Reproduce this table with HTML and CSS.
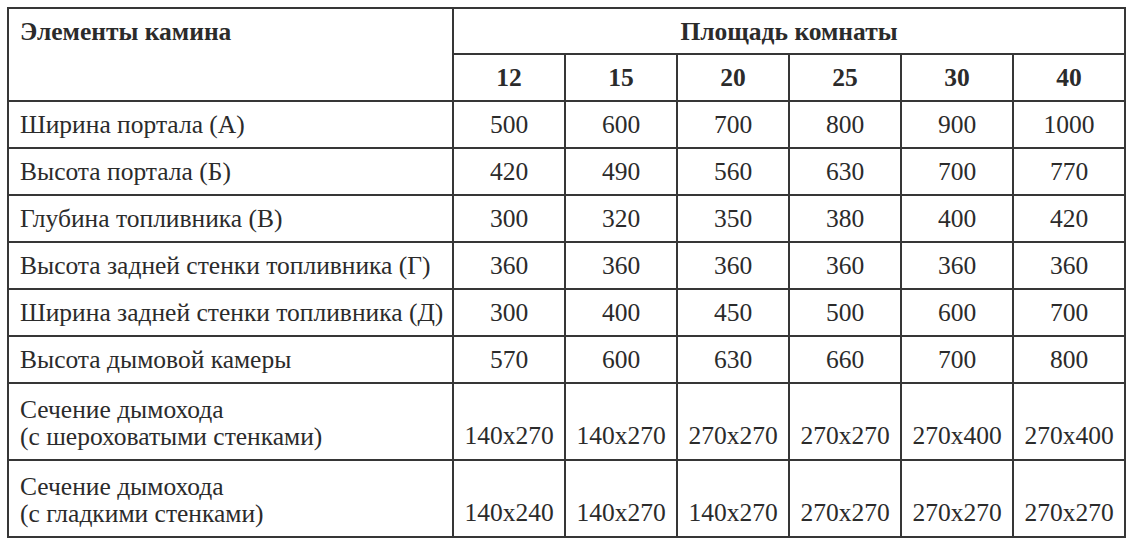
FILE: index.html
```html
<!DOCTYPE html>
<html lang="ru">
<head>
<meta charset="utf-8">
<link rel="stylesheet" href="styles.css">
</head>
<body>
<table class="spec">
  <colgroup>
    <col class="c-label">
    <col class="c-num"><col class="c-num"><col class="c-num"><col class="c-num"><col class="c-num"><col class="c-num">
  </colgroup>
  <thead>
    <tr class="h1">
      <th class="corner" rowspan="2">Элементы камина</th>
      <th class="group" colspan="6">Площадь комнаты</th>
    </tr>
    <tr class="h2">
      <th>12</th><th>15</th><th>20</th><th>25</th><th>30</th><th>40</th>
    </tr>
  </thead>
  <tbody>
    <tr class="r1"><td class="label">Ширина портала (А)</td><td>500</td><td>600</td><td>700</td><td>800</td><td>900</td><td>1000</td></tr>
    <tr class="r1"><td class="label">Высота портала (Б)</td><td>420</td><td>490</td><td>560</td><td>630</td><td>700</td><td>770</td></tr>
    <tr class="r1"><td class="label">Глубина топливника (В)</td><td>300</td><td>320</td><td>350</td><td>380</td><td>400</td><td>420</td></tr>
    <tr class="r1"><td class="label">Высота задней стенки топливника (Г)</td><td>360</td><td>360</td><td>360</td><td>360</td><td>360</td><td>360</td></tr>
    <tr class="r1"><td class="label">Ширина задней стенки топливника (Д)</td><td>300</td><td>400</td><td>450</td><td>500</td><td>600</td><td>700</td></tr>
    <tr class="r1"><td class="label">Высота дымовой камеры</td><td>570</td><td>600</td><td>630</td><td>660</td><td>700</td><td>800</td></tr>
    <tr class="r2"><td class="label">Сечение дымохода<br>(с шероховатыми стенками)</td><td>140x270</td><td>140x270</td><td>270x270</td><td>270x270</td><td>270x400</td><td>270x400</td></tr>
    <tr class="r2 last"><td class="label">Сечение дымохода<br>(с гладкими стенками)</td><td>140x240</td><td>140x270</td><td>140x270</td><td>270x270</td><td>270x270</td><td>270x270</td></tr>
  </tbody>
</table>
</body>
</html>
```
FILE: styles.css
```css
html, body {
  margin: 0;
  padding: 0;
  background: #ffffff;
}
body {
  padding: 7px 0 0 7px;
  font-family: "Liberation Serif", "Times New Roman", serif;
  color: #2b2b2b;
}
.spec {
  border-collapse: collapse;
  width: 1116px;
  table-layout: fixed;
  font-size: 25.5px;
}
.c-label { width: 445px; }
.c-num { width: 112px; }
.spec th, .spec td {
  border: 2px solid #363636;
  padding: 0;
  text-align: center;
  vertical-align: middle;
  line-height: 27px;
  white-space: nowrap;
}
.spec th {
  font-weight: bold;
}
.spec .corner {
  text-align: left;
  vertical-align: top;
  padding: 9px 0 0 11px;
}
.h1 { height: 46px; }
.h2 { height: 47px; }
.r1 { height: 47px; }
.r2 { height: 77px; }
.r2 td { vertical-align: bottom; padding-bottom: 10px; }
.spec .label {
  text-align: left;
  padding-left: 11px;
}
.r2 .label { vertical-align: top; padding-top: 12px; padding-bottom: 0; }
```
